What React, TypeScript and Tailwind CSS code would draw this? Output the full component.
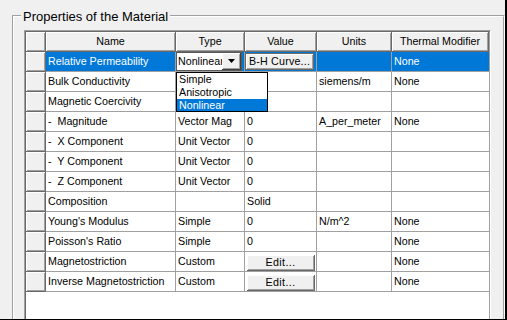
import React from 'react';

type Row = {
  name: string;
  type?: string;
  value?: string;
  units?: string;
  thermal?: string;
  edit?: boolean;
  selected?: boolean;
};

const rows: Row[] = [
  { name: 'Relative Permeability', thermal: 'None', selected: true },
  { name: 'Bulk Conductivity', units: 'siemens/m', thermal: 'None' },
  { name: 'Magnetic Coercivity' },
  { name: '-  Magnitude', type: 'Vector Mag', value: '0', units: 'A_per_meter', thermal: 'None' },
  { name: '-  X Component', type: 'Unit Vector', value: '0' },
  { name: '-  Y Component', type: 'Unit Vector', value: '0' },
  { name: '-  Z Component', type: 'Unit Vector', value: '0' },
  { name: 'Composition', value: 'Solid' },
  { name: "Young's Modulus", type: 'Simple', value: '0', units: 'N/m^2', thermal: 'None' },
  { name: "Poisson's Ratio", type: 'Simple', value: '0', thermal: 'None' },
  { name: 'Magnetostriction', type: 'Custom', edit: true, thermal: 'None' },
  { name: 'Inverse Magnetostriction', type: 'Custom', edit: true, thermal: 'None' },
];

const headers = ['Name', 'Type', 'Value', 'Units', 'Thermal Modifier'];

const raised =
  'bg-[#f0f0f0] border-r border-b border-[#696969] shadow-[inset_1px_1px_0_#ffffff,inset_-1px_-1px_0_#a0a0a0]';
const cell = 'h-[20px] flex items-center pl-[2px] border-r border-b border-[#a0a0a0] whitespace-pre overflow-hidden';
const lastCell = 'h-[20px] flex items-center pl-[2px] border-b border-[#a0a0a0] whitespace-pre overflow-hidden';
const selCell =
  'h-[20px] flex items-center pl-[2px] border-r border-b border-[#a0a0a0] bg-[#0078d7] text-white whitespace-pre overflow-hidden';
const selLast =
  'h-[20px] flex items-center pl-[2px] border-b border-[#a0a0a0] bg-[#0078d7] text-white whitespace-pre overflow-hidden';

function GridButton({ label, className }: { label: string; className: string }) {
  return (
    <div
      className={`flex items-center justify-center border-r border-b border-[#696969] bg-[#f0f0f0] text-black shadow-[inset_1px_1px_0_#ffffff,inset_-1px_-1px_0_#a0a0a0] ${className}`}
    >
      {label}
    </div>
  );
}

export default function App() {
  return (
    <div className="w-[507px] h-[320px] overflow-hidden bg-[#f0f0f0] border-r-2 border-b border-black font-['Liberation_Sans',Arial,sans-serif] text-black">
      <div className="pl-[12px] pt-[15px]">
        {/* etched group box */}
        <div className="relative w-[493px] h-[400px] border border-l-[#a0a0a0] border-t-[#a0a0a0] border-r-white border-b-white">
          <span className="absolute left-[8px] top-[-7px] bg-[#f0f0f0] px-[2px] text-[13px] leading-[15px]">
            Properties of the Material
          </span>
          <div className="h-full border border-l-white border-t-white border-r-[#a0a0a0] border-b-[#a0a0a0]">
            {/* grid control */}
            <div className="ml-[10px] mt-[13px] w-[467px] h-[300px] border-l border-t border-r border-l-[#a0a0a0] border-t-[#a0a0a0] border-r-white">
              <div className="relative h-full bg-white border-l border-t border-r border-l-[#696969] border-t-[#696969] border-r-[#a0a0a0] text-[10.7px]">
                <div className="grid grid-cols-[20px_130px_69px_72px_75px_97px]">
                  <div className={`h-[20px] ${raised}`} />
                  {headers.map((h) => (
                    <div key={h} className={`h-[20px] flex items-center justify-center ${raised}`}>
                      {h}
                    </div>
                  ))}

                  {rows.map((r) => (
                    <React.Fragment key={r.name}>
                      <div className={`h-[20px] ${raised}`} />
                      {r.selected ? (
                        <>
                          <div className={selCell}>{r.name}</div>
                          <div className="h-[20px] border-r border-b border-[#a0a0a0] bg-[#0078d7]">
                            <div className="flex h-[19px] w-[66px] bg-white border border-[#5a5a5a]">
                              <span className="flex-1 overflow-hidden whitespace-nowrap pl-[1px] leading-[17px]">
                                Nonlinear
                              </span>
                              <div className="flex w-[19px] items-center justify-center border-r border-b border-[#404040] bg-[#f0f0f0] shadow-[inset_1px_1px_0_#ffffff,inset_-1px_-1px_0_#a0a0a0]">
                                <svg width="7" height="4" viewBox="0 0 7 4">
                                  <polygon points="0,0 7,0 3.5,4" fill="#000" />
                                </svg>
                              </div>
                            </div>
                          </div>
                          <div className="h-[20px] flex items-center border-r border-b border-[#a0a0a0] bg-[#0078d7]">
                            <GridButton label="B-H Curve..." className="h-[17px] w-[69px] border-l border-t border-l-[#696969] border-t-[#696969] tracking-[0.2px]" />
                          </div>
                          <div className={selCell}>{r.units ?? ''}</div>
                          <div className={selLast}>{r.thermal ?? ''}</div>
                        </>
                      ) : (
                        <>
                          <div className={cell}>{r.name}</div>
                          <div className={cell}>{r.type ?? ''}</div>
                          {r.edit ? (
                            <div className="h-[20px] flex items-start pl-[2px] pt-[3px] border-r border-b border-[#a0a0a0]">
                              <GridButton label="Edit..." className="h-[16px] w-[68px] tracking-[0.4px]" />
                            </div>
                          ) : (
                            <div className={cell}>{r.value ?? ''}</div>
                          )}
                          <div className={cell}>{r.units ?? ''}</div>
                          <div className={lastCell}>{r.thermal ?? ''}</div>
                        </>
                      )}
                    </React.Fragment>
                  ))}
                </div>

                {/* open dropdown list of the Type combobox */}
                <div className="absolute left-[150px] top-[40px] z-10 flex w-[92px] h-[40px] flex-col border border-black bg-white">
                  <div className="h-[13px] pl-[2px] leading-[13px]">Simple</div>
                  <div className="h-[13px] pl-[2px] leading-[13px]">Anisotropic</div>
                  <div className="h-[12px] pl-[2px] leading-[12px] bg-[#0078d7] text-white">Nonlinear</div>
                </div>
              </div>
            </div>
          </div>
        </div>
      </div>
    </div>
  );
}
